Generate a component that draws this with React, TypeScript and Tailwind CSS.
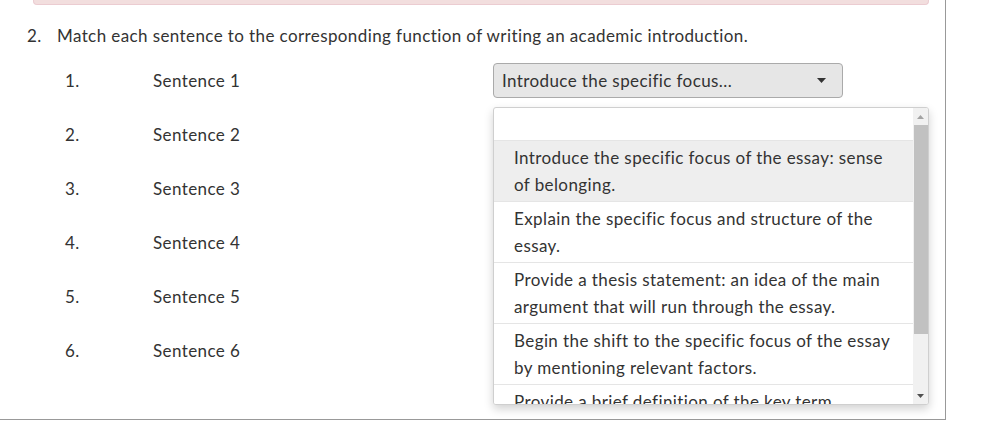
import React from 'react';

const sentences = [1, 2, 3, 4, 5, 6];

const options = [
  'Introduce the specific focus of the essay: sense of belonging.',
  'Explain the specific focus and structure of the essay.',
  'Provide a thesis statement: an idea of the main argument that will run through the essay.',
  'Begin the shift to the specific focus of the essay by mentioning relevant factors.',
  'Provide a brief definition of the key term.',
];

const Caret: React.FC = () => (
  <svg width="9" height="5" viewBox="0 0 9 5" className="shrink-0">
    <path d="M0 0 L9 0 L4.5 5 Z" fill="#333" />
  </svg>
);

const SelectBox: React.FC<{ value: string }> = ({ value }) => (
  <div className="w-[350px] h-[35px] flex items-center justify-between pl-[8px] pr-[16px] bg-[#e6e6e6] border border-[#aaa] rounded-[4px] text-[#333]">
    <span>{value}</span>
    <Caret />
  </div>
);

const Dropdown: React.FC = () => (
  <div className="absolute left-[493px] top-[107px] w-[436px] h-[298px] bg-white border border-[#cfcfcf] rounded-[3px] shadow-[0_4px_10px_rgba(0,0,0,0.18)] flex overflow-hidden">
    <div className="flex-1 overflow-hidden">
      <div className="h-[33px] border-b border-[#e5e5e5]" />
      {options.map((opt, i) => (
        <div
          key={i}
          className={`px-5 py-[3px] leading-[27px] border-b border-[#e5e5e5] text-[#333] ${i === 0 ? 'bg-[#eeeeee]' : 'bg-white'}`}
        >
          {opt}
        </div>
      ))}
    </div>
    <div className="w-[15px] bg-[#f1f1f1] flex flex-col items-center">
      <div className="h-[17px] flex items-center justify-center">
        <svg width="7" height="4" viewBox="0 0 7 4">
          <path d="M0 4 L7 4 L3.5 0 Z" fill="#a3a3a3" />
        </svg>
      </div>
      <div className="w-[14px] h-[209px] bg-[#c1c1c1]" />
      <div className="flex-1" />
      <div className="h-[17px] flex items-center justify-center">
        <svg width="7" height="4" viewBox="0 0 7 4">
          <path d="M0 0 L7 0 L3.5 4 Z" fill="#505050" />
        </svg>
      </div>
    </div>
  </div>
);

export default function App() {
  return (
    <div
      className="relative w-[946px] h-[420px] border-r border-b border-[#999] bg-white text-[17px] tracking-[0.4px] text-[#333]"
      style={{ fontFamily: 'Lato, "Open Sans", sans-serif' }}
    >
      <div className="ml-[33px] w-[896px] h-[5px] bg-[#f2dede] border-x border-b border-[#ebccd1] rounded-b-[4px]" />

      <div className="flex pl-[27px] pt-[19px] leading-[24px]">
        <span className="w-[30px]">2.</span>
        <span>Match each sentence to the corresponding function of writing an academic introduction.</span>
      </div>

      <div className="flex flex-col gap-[19px] pt-[15px]">
        {sentences.map((n) => (
          <div key={n} className="flex items-center h-[35px]">
            <span className="w-[153px] pl-[65px]">{n}.</span>
            <span className="w-[340px]">Sentence {n}</span>
            <SelectBox value={n === 1 ? 'Introduce the specific focus...' : ''} />
          </div>
        ))}
      </div>

      <Dropdown />
    </div>
  );
}
